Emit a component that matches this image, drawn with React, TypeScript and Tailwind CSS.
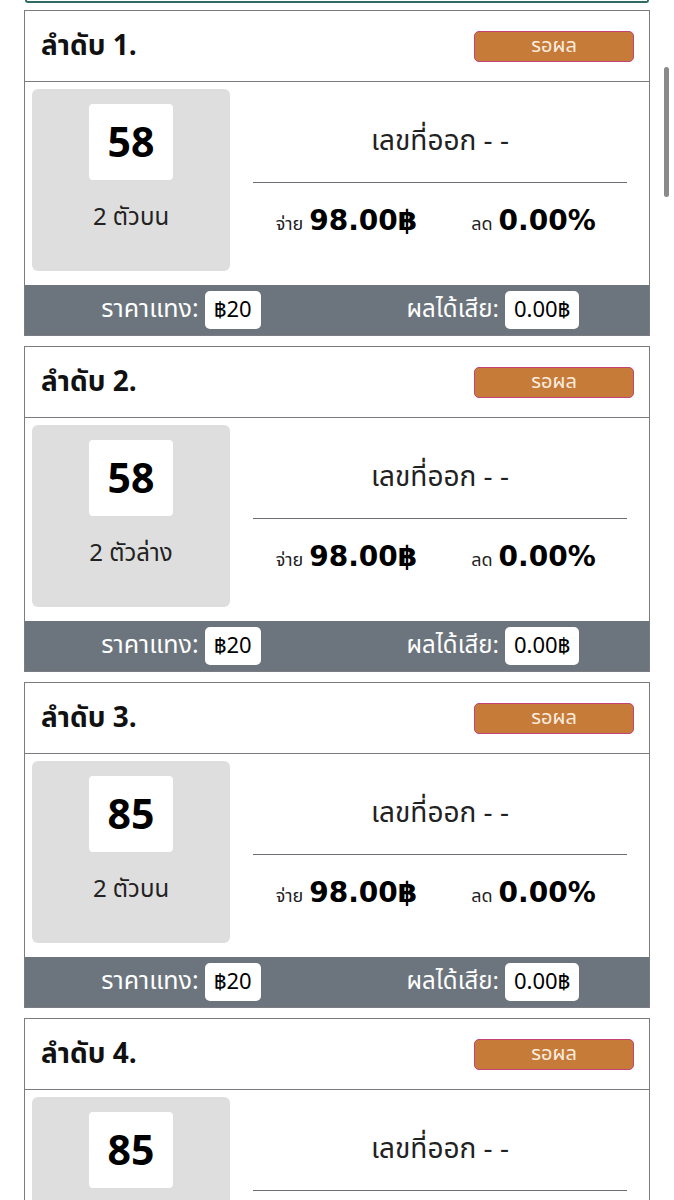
const thai = "font-['Noto_Sans_Thai','Noto_Sans',sans-serif]";

type Bet = {
  no: number;
  num: string;
  kind: string;
  pay: string;
  discount: string;
  price: string;
  result: string;
};

const bets: Bet[] = [
  { no: 1, num: "58", kind: "2 ตัวบน", pay: "98.00฿", discount: "0.00%", price: "฿20", result: "0.00฿" },
  { no: 2, num: "58", kind: "2 ตัวล่าง", pay: "98.00฿", discount: "0.00%", price: "฿20", result: "0.00฿" },
  { no: 3, num: "85", kind: "2 ตัวบน", pay: "98.00฿", discount: "0.00%", price: "฿20", result: "0.00฿" },
  { no: 4, num: "85", kind: "2 ตัวบน", pay: "98.00฿", discount: "0.00%", price: "฿20", result: "0.00฿" },
];

function BetCard({ bet }: { bet: Bet }) {
  return (
    <div className="border border-[#7b7b82] bg-white">
      {/* header */}
      <div className="flex h-[71px] items-center justify-between border-b border-[#7b7b82] pl-4 pr-[15px]">
        <span className="mt-[2px] text-[28px] font-bold leading-[36px] text-[#111]">ลำดับ {bet.no}.</span>
        <span className="flex h-[31px] w-[160px] items-center justify-center rounded-[5px] border border-[#c4437a] bg-[#c77b38] text-[20px] text-[#fbeee0]">
          รอผล
        </span>
      </div>

      {/* body */}
      <div className="flex h-[203px] pl-[7px] pr-[22px] pt-[7px]">
        <div className="flex h-[182px] w-[198px] flex-col items-center rounded-[6px] bg-[#dedede] pt-[15px]">
          <div className="flex h-[76px] w-[84px] items-center justify-center rounded-[4px] bg-white font-['Noto_Sans',sans-serif] text-[41px] font-bold text-black">
            {bet.num}
          </div>
          <div className="mt-[22px] text-[24px] leading-[32px] text-[#222]">{bet.kind}</div>
        </div>

        <div className="ml-[23px] flex flex-1 flex-col pt-[35px]">
          <div className="h-[36px] text-center text-[28px] leading-[36px] text-[#222]">เลขที่ออก - -</div>
          <div className="mt-[22px] h-px bg-[#6f6f75]" />
          <div className="mt-[17px] grid h-[40px] grid-cols-2 items-center">
            <div className="flex items-baseline justify-center gap-[6px]">
              <span className="text-[18px] text-[#222]">จ่าย</span>
              <span className="font-['DejaVu_Sans',sans-serif] text-[28px] font-bold text-black">{bet.pay}</span>
            </div>
            <div className="flex items-baseline justify-center gap-[6px]">
              <span className="text-[18px] text-[#222]">ลด</span>
              <span className="font-['DejaVu_Sans',sans-serif] text-[28px] font-bold text-black">{bet.discount}</span>
            </div>
          </div>
        </div>
      </div>

      {/* footer */}
      <div className="grid h-[50px] grid-cols-2 items-center bg-[#6c757d]">
        <div className="flex items-center justify-center gap-[6px]">
          <span className="text-[25px] text-white">ราคาแทง:</span>
          <span className="flex h-[38px] items-center rounded-[5px] bg-white px-[9px] text-[22px] text-black">{bet.price}</span>
        </div>
        <div className="flex items-center justify-center gap-[6px]">
          <span className="text-[24px] text-white">ผลได้เสีย:</span>
          <span className="flex h-[38px] items-center rounded-[5px] bg-white px-[9px] text-[22px] text-black">{bet.result}</span>
        </div>
      </div>
    </div>
  );
}

export default function App() {
  return (
    <div className={`relative h-[1200px] overflow-hidden bg-white px-6 ${thai}`}>
      <div className="mx-px h-[3px] rounded-b-[6px] border-x-2 border-b-2 border-[#2f6b64]" />
      <div className="mt-[7px] flex flex-col gap-[10px]">
        {bets.map((b) => (
          <BetCard key={b.no} bet={b} />
        ))}
      </div>
      {/* scroll indicator */}
      <div className="absolute right-[5px] top-[67px] h-[130px] w-[5px] rounded-full bg-[#8a8a8a]" />
    </div>
  );
}
